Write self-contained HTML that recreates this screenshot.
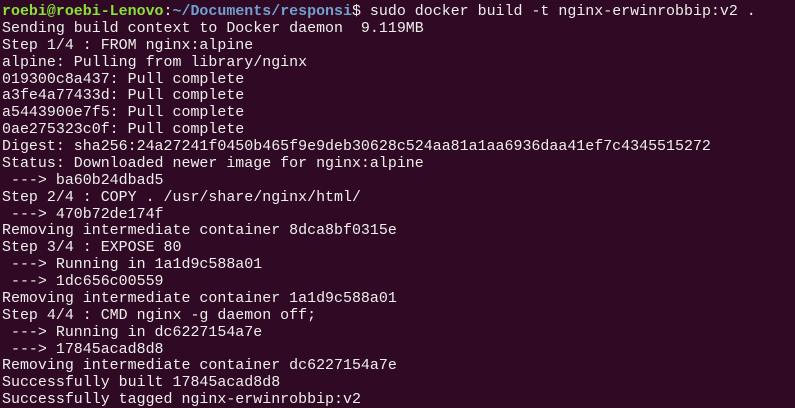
<!DOCTYPE html>
<html><head><meta charset="utf-8"><style>
html,body{margin:0;padding:0;background:#300a24;width:795px;height:408px;overflow:hidden}
pre{margin:0;padding:4px 0 0 2px;font-family:"Liberation Mono",monospace;font-size:14.96px;line-height:16.87px;color:#eeeeec;white-space:pre}
.g{color:#8ae234;font-weight:bold}.b{color:#729fcf;font-weight:bold}
</style></head><body><pre><span class="g">roebi@roebi-Lenovo</span>:<span class="b">~/Documents/responsi</span>$ sudo docker build -t nginx-erwinrobbip:v2 .
Sending build context to Docker daemon  9.119MB
Step 1/4 : FROM nginx:alpine
alpine: Pulling from library/nginx
019300c8a437: Pull complete
a3fe4a77433d: Pull complete
a5443900e7f5: Pull complete
0ae275323c0f: Pull complete
Digest: sha256:24a27241f0450b465f9e9deb30628c524aa81a1aa6936daa41ef7c4345515272
Status: Downloaded newer image for nginx:alpine
 ---&gt; ba60b24dbad5
Step 2/4 : COPY . /usr/share/nginx/html/
 ---&gt; 470b72de174f
Removing intermediate container 8dca8bf0315e
Step 3/4 : EXPOSE 80
 ---&gt; Running in 1a1d9c588a01
 ---&gt; 1dc656c00559
Removing intermediate container 1a1d9c588a01
Step 4/4 : CMD nginx -g daemon off;
 ---&gt; Running in dc6227154a7e
 ---&gt; 17845acad8d8
Removing intermediate container dc6227154a7e
Successfully built 17845acad8d8
Successfully tagged nginx-erwinrobbip:v2</pre></body></html>
